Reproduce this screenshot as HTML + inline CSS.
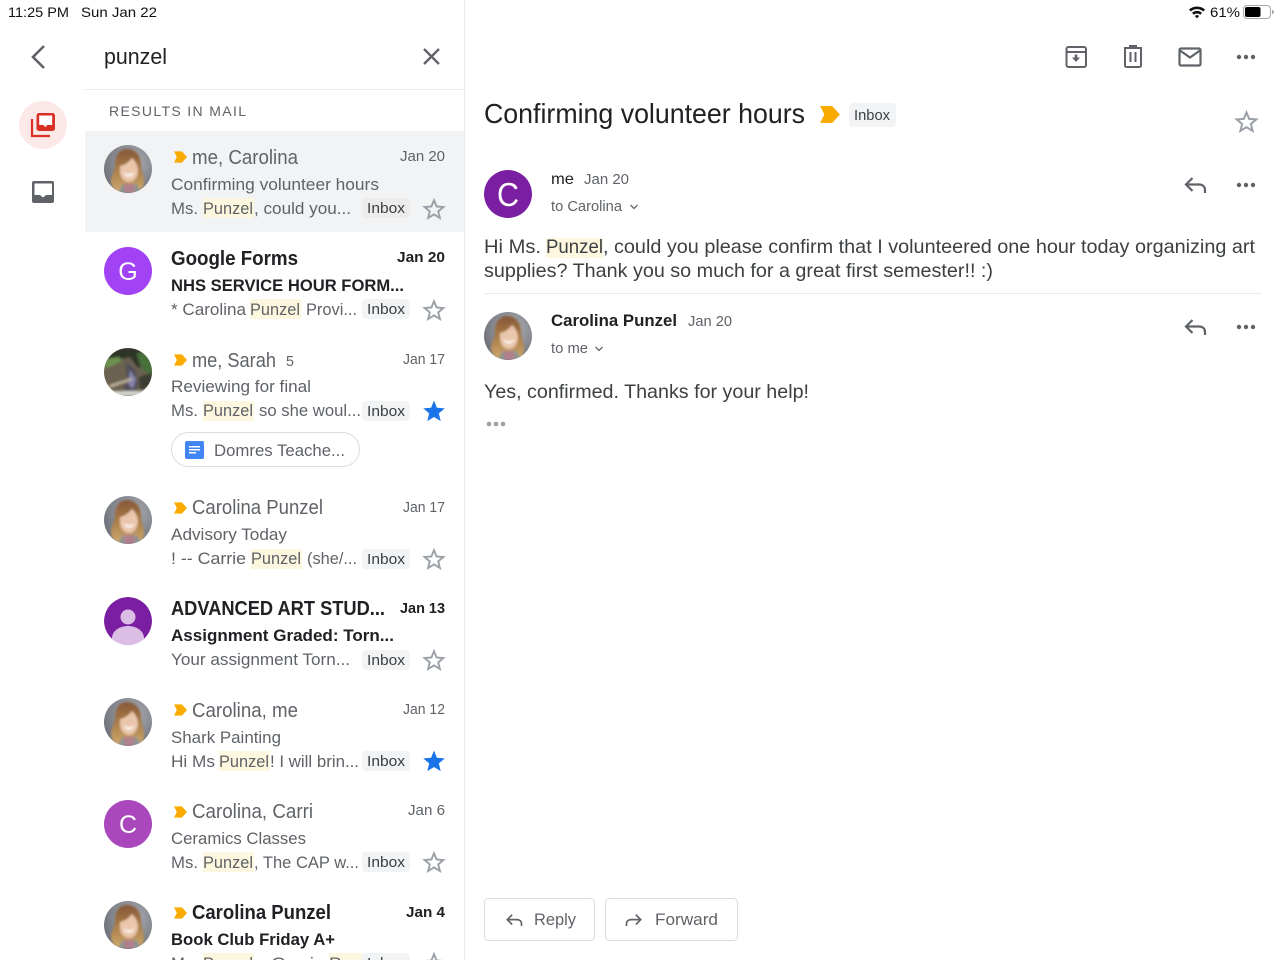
<!DOCTYPE html>
<html><head><meta charset="utf-8"><title>Mail</title>
<style>
html,body{margin:0;padding:0;background:#fff;width:1280px;height:960px;overflow:hidden}
svg{display:block}
text{font-family:"Liberation Sans",sans-serif;white-space:pre}
.n{font-size:20px;fill:#5f6368}
.nb{font-size:20px;fill:#202124;font-weight:bold}
.d{font-size:14.5px;fill:#5f6368}
.db{font-size:14.5px;fill:#202124;font-weight:bold}
.s{font-size:17px;fill:#5f6368}
.sb{font-size:17px;fill:#202124;font-weight:bold}
.c{font-size:14.5px;fill:#3c4043}
.b{font-size:19.5px;fill:#3c4043}
</style></head><body>
<svg width="1280" height="960" viewBox="0 0 1280 960" xmlns="http://www.w3.org/2000/svg">
<defs>
<clipPath id="cc"><circle cx="24" cy="24" r="24"/></clipPath>
<radialGradient id="bg" cx=".62" cy=".35" r=".75"><stop offset="0" stop-color="#acaeb4"/><stop offset="1" stop-color="#686b74"/></radialGradient>
<linearGradient id="hair" x1="0" y1="0" x2="0" y2="1"><stop offset="0" stop-color="#86583a"/><stop offset=".45" stop-color="#a87a45"/><stop offset="1" stop-color="#d0ab70"/></linearGradient>
<filter id="bl"><feGaussianBlur stdDeviation="1"/></filter>
<filter id="bl2"><feGaussianBlur stdDeviation="1.300"/></filter>
<symbol id="photo" viewBox="0 0 48 48" overflow="visible"><g clip-path="url(#cc)"><rect width="48" height="48" fill="url(#bg)"/><g filter="url(#bl)"><path d="M23 4C14 4 11 12 11 20c0 6-4 10-4 16 0 6 5 12 10 12h15c4 0 8-5 8-11 0-6-3-11-3-17C37 11 32 4 23 4z" fill="url(#hair)"/><path d="M19 48l1-9h10l2 9z" fill="#b0808c"/><path d="M14 48l5-10 2 10zM38 48l-7-11-1 11z" fill="#8a9490"/><path d="M16 21c5-1 9-4 12-8 3 3 6 7 6 12 0 7-4 12-9 12s-9-5-9-11z" fill="#eac6ac"/><path d="M19.500 27c3 2.500 7.500 2.500 11 0-1 4-3.500 5-5.500 5s-4.500-1-5.500-5z" fill="#fff" opacity=".7"/></g></g></symbol>
<symbol id="nature" viewBox="0 0 48 48" overflow="visible"><g clip-path="url(#cc)"><rect width="48" height="48" fill="#6b6150"/><g filter="url(#bl2)"><path d="M0 0h48v14L34 20 26 9 12 12 0 18z" fill="#2e3526"/><path d="M1 11l14-2 3 4-10 5-8 3z" fill="#6c9150"/><path d="M33 5l9-1 6 10v14l-9-6-4-8z" fill="#47703a"/><path d="M22 14l9 8 3 12-3 14H16l7-14z" fill="#4f4c5c"/><path d="M26 22l6 9-3 10-5-5z" fill="#8786ad"/><path d="M5 37l22-7 1 2-22 8z" fill="#c4b9a2"/><path d="M0 43h48v5H0z" fill="#d4d6cc"/><path d="M35 29l13-4v12l-12 5z" fill="#3a3e33"/></g></g></symbol>
<symbol id="mk" viewBox="0 0 14 12"><path d="M0 0h8.500L14 6l-5.500 6H0l3-6z" fill="#f9ab00"/></symbol>
<symbol id="star" viewBox="0 0 24 24"><path d="M12 3.200l2.600 6.300 6.800.5-5.200 4.400 1.700 6.600L12 17.400 6.100 21l1.700-6.600L2.600 10l6.800-.5z" fill="none" stroke="#9aa0a6" stroke-width="1.900" stroke-linejoin="miter"/></symbol>
<symbol id="starf" viewBox="0 0 24 24"><path d="M12 1.500l2.900 7.300 7.900.6-6 5 1.900 7.700L12 18 5.300 22.100l1.900-7.700-6-5 7.900-.6z" fill="#1a73e8"/></symbol>
<symbol id="dots" viewBox="0 0 20 6"><circle cx="3" cy="3" r="2.200" fill="#5f6368"/><circle cx="10" cy="3" r="2.200" fill="#5f6368"/><circle cx="17" cy="3" r="2.200" fill="#5f6368"/></symbol>
<symbol id="rep" viewBox="0 0 24 24"><path d="M22 20v-3c0-3.500-2.500-5.500-6-5.500H3M9.500 5L3 11.500 9.500 18" fill="none" stroke="#5f6368" stroke-width="2.200"/></symbol>
</defs>

<!-- status bar -->
<text x="8" y="17" font-size="14" fill="#111" textLength="61" lengthAdjust="spacingAndGlyphs">11:25 PM</text>
<text x="81" y="17" font-size="14" fill="#111" textLength="76" lengthAdjust="spacingAndGlyphs">Sun Jan 22</text>
<path d="M1189 9.500a12 12 0 0 1 16 0l-1.700 2a9.500 9.500 0 0 0-12.600 0zM1192 12.800a7.500 7.500 0 0 1 10 0l-1.700 2a5 5 0 0 0-6.600 0zM1194.800 16a3.300 3.300 0 0 1 4.400 0l-2.200 2.400z" fill="#111"/>
<text x="1210" y="17" font-size="14" fill="#111" textLength="30" lengthAdjust="spacingAndGlyphs">61%</text>
<rect x="1243.500" y="5.500" width="27" height="13" rx="3.500" fill="none" stroke="#a8a8a8"/>
<rect x="1245" y="7" width="15.500" height="10" rx="2" fill="#000"/>
<path d="M1272 10v4a2 2 0 0 0 0-4z" fill="#a8a8a8"/>

<!-- frame -->
<rect x="464" y="0" width="1" height="960" fill="#e8eaed"/>
<rect x="85" y="89" width="379" height="1" fill="#e8eaed"/>
<rect x="85" y="131" width="379" height="101" fill="#f1f3f4"/>

<!-- rail / search -->
<path d="M44 46L33 57l11 11" fill="none" stroke="#5f6368" stroke-width="2.600"/>
<text x="104" y="64" font-size="22" fill="#202124" textLength="63" lengthAdjust="spacingAndGlyphs">punzel</text>
<path d="M424 49l15 15M439 49l-15 15" stroke="#5f6368" stroke-width="2.300" fill="none"/>
<text x="109" y="116" font-size="14" fill="#5f6368" textLength="137" lengthAdjust="spacing">RESULTS IN MAIL</text>
<circle cx="43" cy="125" r="24" fill="#fce8e6"/>
<path d="M32 119v17h18" fill="none" stroke="#d93025" stroke-width="2.200"/>
<rect x="37" y="114" width="17" height="16" fill="#fff"/>
<path d="M39 113h13.500a2.500 2.500 0 0 1 2.500 2.500v13a2.500 2.500 0 0 1-2.500 2.500H39a2.500 2.500 0 0 1-2.500-2.500v-13A2.500 2.500 0 0 1 39 113zm.200 2.500v9.500h4.300l1.800 2.200 1.800-2.200h5.100v-9.500z" fill="#d93025" fill-rule="evenodd"/>
<path d="M34 181h18a2 2 0 0 1 2 2v18a2 2 0 0 1-2 2H34a2 2 0 0 1-2-2v-18a2 2 0 0 1 2-2zm.500 2.500v11.500h5.500l3 2.500 3-2.500h6v-11.500z" fill="#5f6368" fill-rule="evenodd"/>

<!-- row 1 -->
<use href="#photo" x="104" y="145" width="48" height="48"/>
<use href="#mk" x="174" y="151" width="13" height="12"/>
<text class="n" x="192" y="164" textLength="106" lengthAdjust="spacingAndGlyphs">me, Carolina</text>
<text class="d" x="400" y="161" textLength="45" lengthAdjust="spacingAndGlyphs">Jan 20</text>
<text class="s" x="171" y="190" textLength="208" lengthAdjust="spacingAndGlyphs">Confirming volunteer hours</text>
<rect x="203" y="198" width="51" height="20" fill="#fef7e0"/>
<text class="s" x="171" y="214" textLength="27" lengthAdjust="spacingAndGlyphs">Ms.</text>
<text class="s" x="203" y="214" textLength="50" lengthAdjust="spacingAndGlyphs">Punzel</text>
<text class="s" x="254" y="214" textLength="97" lengthAdjust="spacingAndGlyphs">, could you...</text>
<rect x="362" y="198" width="48" height="20" rx="4" fill="#ececec"/>
<text class="c" x="367" y="213" textLength="38" lengthAdjust="spacingAndGlyphs">Inbox</text>
<use href="#star" x="422" y="197" width="24" height="24"/>

<!-- row 2 -->
<circle cx="128" cy="271" r="24" fill="#a142f4"/>
<text x="128" y="280" font-size="25" fill="#fff" text-anchor="middle">G</text>
<text class="nb" x="171" y="265" textLength="127" lengthAdjust="spacingAndGlyphs">Google Forms</text>
<text class="db" x="397" y="262" textLength="48" lengthAdjust="spacingAndGlyphs">Jan 20</text>
<text class="sb" x="171" y="291" textLength="233" lengthAdjust="spacingAndGlyphs">NHS SERVICE HOUR FORM...</text>
<rect x="250" y="299" width="51" height="20" fill="#fef7e0"/>
<text class="s" x="171" y="315" textLength="75" lengthAdjust="spacingAndGlyphs">* Carolina</text>
<text class="s" x="250" y="315" textLength="50" lengthAdjust="spacingAndGlyphs">Punzel</text>
<text class="s" x="306" y="315" textLength="51" lengthAdjust="spacingAndGlyphs">Provi...</text>
<rect x="362" y="299" width="48" height="20" rx="4" fill="#f1f3f4"/>
<text class="c" x="367" y="314" textLength="38" lengthAdjust="spacingAndGlyphs">Inbox</text>
<use href="#star" x="422" y="298" width="24" height="24"/>

<!-- row 3 -->
<use href="#nature" x="104" y="348" width="48" height="48"/>
<use href="#mk" x="174" y="354" width="13" height="12"/>
<text class="n" x="192" y="367" textLength="84" lengthAdjust="spacingAndGlyphs">me, Sarah</text>
<text class="d" x="286" y="366" textLength="8" lengthAdjust="spacingAndGlyphs">5</text>
<text class="d" x="403" y="364" textLength="42" lengthAdjust="spacingAndGlyphs">Jan 17</text>
<text class="s" x="171" y="392" textLength="140" lengthAdjust="spacingAndGlyphs">Reviewing for final</text>
<rect x="203" y="401" width="51" height="20" fill="#fef7e0"/>
<text class="s" x="171" y="416" textLength="27" lengthAdjust="spacingAndGlyphs">Ms.</text>
<text class="s" x="203" y="416" textLength="50" lengthAdjust="spacingAndGlyphs">Punzel</text>
<text class="s" x="259" y="416" textLength="102" lengthAdjust="spacingAndGlyphs">so she woul...</text>
<rect x="362" y="401" width="48" height="20" rx="4" fill="#f1f3f4"/>
<text class="c" x="367" y="416" textLength="38" lengthAdjust="spacingAndGlyphs">Inbox</text>
<use href="#starf" x="422" y="399" width="24" height="24"/>
<rect x="171.500" y="432.500" width="188" height="34" rx="17" fill="#fff" stroke="#dadce0"/>
<rect x="185" y="441" width="19" height="18" rx="2" fill="#4285f4"/>
<path d="M189 446h11v1.500h-11zM189 449h11v1.500h-11zM189 452h7v1.500h-7z" fill="#fff"/>
<text class="s" x="214" y="456" textLength="131" lengthAdjust="spacingAndGlyphs">Domres Teache...</text>

<!-- row 4 -->
<use href="#photo" x="104" y="496" width="48" height="48"/>
<use href="#mk" x="174" y="502" width="13" height="12"/>
<text class="n" x="192" y="514" textLength="131" lengthAdjust="spacingAndGlyphs">Carolina Punzel</text>
<text class="d" x="403" y="512" textLength="42" lengthAdjust="spacingAndGlyphs">Jan 17</text>
<text class="s" x="171" y="540" textLength="116" lengthAdjust="spacingAndGlyphs">Advisory Today</text>
<rect x="251" y="549" width="51" height="20" fill="#fef7e0"/>
<text class="s" x="171" y="564" textLength="75" lengthAdjust="spacingAndGlyphs">! -- Carrie</text>
<text class="s" x="251" y="564" textLength="50" lengthAdjust="spacingAndGlyphs">Punzel</text>
<text class="s" x="307" y="564" textLength="50" lengthAdjust="spacingAndGlyphs">(she/...</text>
<rect x="362" y="549" width="48" height="20" rx="4" fill="#f1f3f4"/>
<text class="c" x="367" y="564" textLength="38" lengthAdjust="spacingAndGlyphs">Inbox</text>
<use href="#star" x="422" y="547" width="24" height="24"/>

<!-- row 5 -->
<g transform="translate(104,597)"><g clip-path="url(#cc)"><circle cx="24" cy="24" r="24" fill="#7b1fa2"/><circle cx="24" cy="20" r="7.500" fill="#dcbde5"/><ellipse cx="24" cy="41" rx="16" ry="12" fill="#dcbde5"/></g></g>
<text class="nb" x="171" y="615" textLength="214" lengthAdjust="spacingAndGlyphs">ADVANCED ART STUD...</text>
<text class="db" x="400" y="613" textLength="45" lengthAdjust="spacingAndGlyphs">Jan 13</text>
<text class="sb" x="171" y="641" textLength="223" lengthAdjust="spacingAndGlyphs">Assignment Graded: Torn...</text>
<text class="s" x="171" y="665" textLength="179" lengthAdjust="spacingAndGlyphs">Your assignment Torn...</text>
<rect x="362" y="650" width="48" height="20" rx="4" fill="#f1f3f4"/>
<text class="c" x="367" y="665" textLength="38" lengthAdjust="spacingAndGlyphs">Inbox</text>
<use href="#star" x="422" y="648" width="24" height="24"/>

<!-- row 6 -->
<use href="#photo" x="104" y="698" width="48" height="48"/>
<use href="#mk" x="174" y="704" width="13" height="12"/>
<text class="n" x="192" y="717" textLength="106" lengthAdjust="spacingAndGlyphs">Carolina, me</text>
<text class="d" x="403" y="714" textLength="42" lengthAdjust="spacingAndGlyphs">Jan 12</text>
<text class="s" x="171" y="743" textLength="110" lengthAdjust="spacingAndGlyphs">Shark Painting</text>
<rect x="219" y="751" width="51" height="20" fill="#fef7e0"/>
<text class="s" x="171" y="767" textLength="44" lengthAdjust="spacingAndGlyphs">Hi Ms</text>
<text class="s" x="219" y="767" textLength="50" lengthAdjust="spacingAndGlyphs">Punzel</text>
<text class="s" x="270" y="767" textLength="89" lengthAdjust="spacingAndGlyphs">! I will brin...</text>
<rect x="362" y="751" width="48" height="20" rx="4" fill="#f1f3f4"/>
<text class="c" x="367" y="766" textLength="38" lengthAdjust="spacingAndGlyphs">Inbox</text>
<use href="#starf" x="422" y="749" width="24" height="24"/>

<!-- row 7 -->
<circle cx="128" cy="824" r="24" fill="#ab47bc"/>
<text x="128" y="833" font-size="25" fill="#fff" text-anchor="middle">C</text>
<use href="#mk" x="174" y="806" width="13" height="12"/>
<text class="n" x="192" y="818" textLength="121" lengthAdjust="spacingAndGlyphs">Carolina, Carri</text>
<text class="d" x="408" y="815" textLength="37" lengthAdjust="spacingAndGlyphs">Jan 6</text>
<text class="s" x="171" y="844" textLength="135" lengthAdjust="spacingAndGlyphs">Ceramics Classes</text>
<rect x="203" y="852" width="51" height="20" fill="#fef7e0"/>
<text class="s" x="171" y="868" textLength="27" lengthAdjust="spacingAndGlyphs">Ms.</text>
<text class="s" x="203" y="868" textLength="50" lengthAdjust="spacingAndGlyphs">Punzel</text>
<text class="s" x="254" y="868" textLength="105" lengthAdjust="spacingAndGlyphs">, The CAP w...</text>
<rect x="362" y="852" width="48" height="20" rx="4" fill="#f1f3f4"/>
<text class="c" x="367" y="867" textLength="38" lengthAdjust="spacingAndGlyphs">Inbox</text>
<use href="#star" x="422" y="850" width="24" height="24"/>

<!-- row 8 -->
<use href="#photo" x="104" y="901" width="48" height="48"/>
<use href="#mk" x="174" y="907" width="13" height="12"/>
<text class="nb" x="192" y="919" textLength="139" lengthAdjust="spacingAndGlyphs">Carolina Punzel</text>
<text class="db" x="406" y="917" textLength="39" lengthAdjust="spacingAndGlyphs">Jan 4</text>
<text class="sb" x="171" y="945" textLength="164" lengthAdjust="spacingAndGlyphs">Book Club Friday A+</text>
<rect x="203" y="953" width="51" height="20" fill="#fef7e0"/>
<rect x="329" y="953" width="33" height="20" fill="#fef7e0"/>
<text class="s" x="171" y="969" textLength="27" lengthAdjust="spacingAndGlyphs">Ms.</text>
<text class="s" x="203" y="969" textLength="50" lengthAdjust="spacingAndGlyphs">Punzel</text>
<text class="s" x="259" y="969" textLength="66" lengthAdjust="spacingAndGlyphs">- Carrie</text>
<text class="s" x="329" y="969" textLength="33" lengthAdjust="spacingAndGlyphs">Pun</text>
<rect x="362" y="953" width="48" height="20" rx="4" fill="#f1f3f4"/>
<text class="c" x="367" y="968" textLength="38" lengthAdjust="spacingAndGlyphs">Inbox</text>
<use href="#star" x="422" y="951" width="24" height="24"/>

<!-- toolbar -->
<rect x="1066.500" y="47" width="19.500" height="20" rx="2" fill="none" stroke="#5f6368" stroke-width="2"/>
<path d="M1066 52h20" stroke="#5f6368" stroke-width="2"/>
<path d="M1074.700 54.500h2.600v3h2.700l-4 4.500-4-4.500h2.700z" fill="#5f6368"/>
<path d="M1125 48.500v17a1.500 1.500 0 0 0 1.500 1.500h13a1.500 1.500 0 0 0 1.500-1.500v-17" fill="none" stroke="#5f6368" stroke-width="2"/>
<path d="M1124 48h18M1129 46h8M1130.500 52v10M1135.500 52v10" stroke="#5f6368" stroke-width="2" fill="none"/>
<rect x="1179.500" y="48.500" width="21" height="17" rx="1.500" fill="none" stroke="#5f6368" stroke-width="2.200"/>
<path d="M1180 50.500l10 7 10-7" fill="none" stroke="#5f6368" stroke-width="2.200"/>
<use href="#dots" x="1236" y="54" width="20" height="6"/>

<!-- message header -->
<text x="484" y="123" font-size="28" fill="#202124" textLength="321" lengthAdjust="spacingAndGlyphs">Confirming volunteer hours</text>
<use href="#mk" x="820" y="106" width="20" height="17"/>
<rect x="849" y="103" width="47" height="24" rx="4" fill="#f1f3f4"/>
<text class="c" x="854" y="120" textLength="36" lengthAdjust="spacingAndGlyphs">Inbox</text>
<use href="#star" x="1234" y="109" width="25" height="25"/>

<!-- message 1 -->
<circle cx="508" cy="194" r="24" fill="#7b1fa2"/>
<text x="508" y="206" font-size="33" fill="#fff" text-anchor="middle" textLength="22" lengthAdjust="spacingAndGlyphs">C</text>
<text x="551" y="184" font-size="16" fill="#202124" textLength="23" lengthAdjust="spacingAndGlyphs">me</text>
<text class="d" x="584" y="184" textLength="45" lengthAdjust="spacingAndGlyphs">Jan 20</text>
<text class="d" x="551" y="211" textLength="71" lengthAdjust="spacingAndGlyphs">to Carolina</text>
<path d="M630.500 205l3.500 3.500 3.500-3.500" fill="none" stroke="#5f6368" stroke-width="1.300"/>
<use href="#rep" x="1183" y="173" width="24" height="24"/>
<use href="#dots" x="1236" y="182" width="20" height="6"/>
<rect x="546" y="238" width="57" height="20" fill="#fef7e0"/>
<text class="b" x="484" y="253" textLength="57" lengthAdjust="spacingAndGlyphs">Hi Ms.</text>
<text class="b" x="546" y="253" textLength="57" lengthAdjust="spacingAndGlyphs">Punzel</text>
<text class="b" x="603" y="253" textLength="652" lengthAdjust="spacingAndGlyphs">, could you please confirm that I volunteered one hour today organizing art</text>
<text class="b" x="484" y="277" textLength="509" lengthAdjust="spacingAndGlyphs">supplies? Thank you so much for a great first semester!! :)</text>
<rect x="484" y="293" width="778" height="1" fill="#e8eaed"/>

<!-- message 2 -->
<use href="#photo" x="484" y="312" width="48" height="48"/>
<text x="551" y="326" font-size="16.500" font-weight="bold" fill="#202124" textLength="126" lengthAdjust="spacingAndGlyphs">Carolina Punzel</text>
<text class="d" x="688" y="326" textLength="44" lengthAdjust="spacingAndGlyphs">Jan 20</text>
<text class="d" x="551" y="353" textLength="37" lengthAdjust="spacingAndGlyphs">to me</text>
<path d="M595.500 347l3.500 3.500 3.500-3.500" fill="none" stroke="#5f6368" stroke-width="1.300"/>
<use href="#rep" x="1183" y="315" width="24" height="24"/>
<use href="#dots" x="1236" y="324" width="20" height="6"/>
<text class="b" x="484" y="398" textLength="325" lengthAdjust="spacingAndGlyphs">Yes, confirmed. Thanks for your help!</text>
<circle cx="489" cy="424" r="2.300" fill="#9aa0a6"/><circle cx="496" cy="424" r="2.300" fill="#9aa0a6"/><circle cx="503" cy="424" r="2.300" fill="#9aa0a6"/>

<!-- buttons -->
<rect x="484.500" y="898.500" width="110" height="42" rx="4" fill="#fff" stroke="#dadce0"/>
<use href="#rep" x="505" y="911" width="18" height="18"/>
<text x="534" y="925" font-size="17" fill="#5f6368" textLength="42" lengthAdjust="spacingAndGlyphs">Reply</text>
<rect x="605.500" y="898.500" width="132" height="42" rx="4" fill="#fff" stroke="#dadce0"/>
<g transform="translate(643,911) scale(-.75,.75)"><path d="M22 20v-3c0-3.500-2.500-5.500-6-5.500H3M9.500 5L3 11.500 9.500 18" fill="none" stroke="#5f6368" stroke-width="2.200"/></g>
<text x="655" y="925" font-size="17" fill="#5f6368" textLength="63" lengthAdjust="spacingAndGlyphs">Forward</text>
</svg>
</body></html>
